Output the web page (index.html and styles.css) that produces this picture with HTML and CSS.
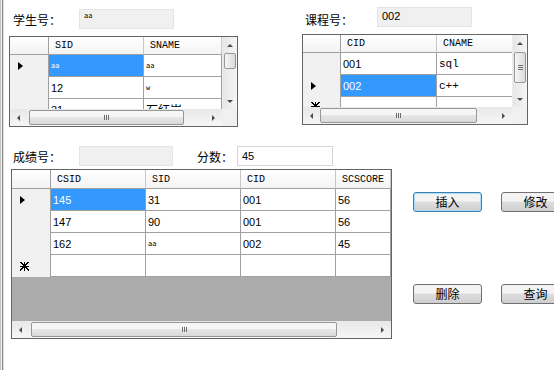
FILE: index.html
```html
<!DOCTYPE html>
<html lang="zh-CN">
<head>
    <meta charset="UTF-8">
    <title>成绩管理</title>
    <link rel="stylesheet" href="styles.css">
</head>
<body>
    <div class="window">
        <div class="frame-edge"></div>
        <div class="content">

            <div class="top">
                <!-- 学生 -->
                <section class="panel panel-student">
                    <div class="field-row">
                        <label class="field-label">学生号：</label>
                        <div class="textbox readonly"><span class="tiny">aa</span></div>
                    </div>
                    <div class="dgv dgv-student">
                        <div class="dgv-cells">
                            <div class="dgv-row dgv-head">
                                <div class="rh"></div><div class="ch">SID</div><div class="ch">SNAME</div>
                            </div>
                            <div class="dgv-row">
                                <div class="rh"><i class="marker-current"></i></div>
                                <div class="cell selected tiny">aa</div><div class="cell tiny">aa</div>
                            </div>
                            <div class="dgv-row">
                                <div class="rh"></div>
                                <div class="cell">12</div><div class="cell tiny">w</div>
                            </div>
                            <div class="dgv-row">
                                <div class="rh"></div>
                                <div class="cell">31</div><div class="cell cjk">石红岩</div>
                            </div>
                        </div>
                        <div class="vscroll">
                            <div class="sb-btn"><i class="arr arr-up"></i></div>
                            <div class="sb-track"><div class="thumb-v thumb-student"></div></div>
                            <div class="sb-btn"><i class="arr arr-down"></i></div>
                        </div>
                        <div class="hscroll">
                            <div class="sb-btn"><i class="arr arr-left"></i></div>
                            <div class="sb-track"><div class="thumb-h thumb-student"><i class="grip-h"></i></div></div>
                            <div class="sb-btn"><i class="arr arr-right"></i></div>
                        </div>
                        <div class="corner"></div>
                    </div>
                </section>

                <!-- 课程 -->
                <section class="panel panel-course">
                    <div class="field-row">
                        <label class="field-label">课程号：</label>
                        <div class="textbox readonly">002</div>
                    </div>
                    <div class="dgv dgv-course">
                        <div class="dgv-cells">
                            <div class="dgv-row dgv-head">
                                <div class="rh"></div><div class="ch">CID</div><div class="ch">CNAME</div>
                            </div>
                            <div class="dgv-row">
                                <div class="rh"></div>
                                <div class="cell">001</div><div class="cell mono">sql</div>
                            </div>
                            <div class="dgv-row">
                                <div class="rh"><i class="marker-current"></i></div>
                                <div class="cell selected">002</div><div class="cell mono">c++</div>
                            </div>
                            <div class="dgv-row">
                                <div class="rh"><i class="marker-new"></i></div>
                                <div class="cell"></div><div class="cell"></div>
                            </div>
                        </div>
                        <div class="vscroll">
                            <div class="sb-btn"><i class="arr arr-up"></i></div>
                            <div class="sb-track"><div class="thumb-v thumb-course"><i class="grip-v"></i></div></div>
                            <div class="sb-btn"><i class="arr arr-down"></i></div>
                        </div>
                        <div class="hscroll">
                            <div class="sb-btn"><i class="arr arr-left"></i></div>
                            <div class="sb-track"><div class="thumb-h thumb-course"><i class="grip-h"></i></div></div>
                            <div class="sb-btn"><i class="arr arr-right"></i></div>
                        </div>
                        <div class="corner"></div>
                    </div>
                </section>
            </div>

            <!-- 成绩 -->
            <section class="bottom">
                <div class="field-row score-fields">
                    <label class="field-label">成绩号：</label>
                    <div class="textbox readonly"></div>
                    <label class="field-label label-score">分数：</label>
                    <div class="textbox editable">45</div>
                </div>

                <div class="bottom-main">
                    <div class="dgv dgv-score">
                        <div class="dgv-cells">
                            <div class="dgv-row dgv-head">
                                <div class="rh"></div><div class="ch">CSID</div><div class="ch">SID</div><div class="ch">CID</div><div class="ch">SCSCORE</div>
                            </div>
                            <div class="dgv-row">
                                <div class="rh"><i class="marker-current"></i></div>
                                <div class="cell selected">145</div><div class="cell">31</div><div class="cell">001</div><div class="cell">56</div>
                            </div>
                            <div class="dgv-row">
                                <div class="rh"></div>
                                <div class="cell">147</div><div class="cell">90</div><div class="cell">001</div><div class="cell">56</div>
                            </div>
                            <div class="dgv-row">
                                <div class="rh"></div>
                                <div class="cell">162</div><div class="cell tiny">aa</div><div class="cell">002</div><div class="cell">45</div>
                            </div>
                            <div class="dgv-row">
                                <div class="rh"><i class="marker-new"></i></div>
                                <div class="cell"></div><div class="cell"></div><div class="cell"></div><div class="cell"></div>
                            </div>
                        </div>
                        <div class="hscroll">
                            <div class="sb-btn"><i class="arr arr-left"></i></div>
                            <div class="sb-track"><div class="thumb-h thumb-score"><i class="grip-h"></i></div></div>
                            <div class="sb-btn"><i class="arr arr-right"></i></div>
                        </div>
                    </div>

                    <div class="buttons">
                        <button class="btn btn-default">插入</button>
                        <button class="btn">修改</button>
                        <button class="btn">删除</button>
                        <button class="btn">查询</button>
                    </div>
                </div>
            </section>

        </div>
    </div>
</body>
</html>
```

FILE: styles.css
```css
* {
    margin: 0;
    padding: 0;
    box-sizing: border-box;
}

body {
    width: 554px;
    height: 370px;
    overflow: hidden;
    background: #ffffff;
    color: #000;
    font-family: 'Liberation Sans', 'Noto Sans CJK SC', sans-serif;
    font-size: 11px;
}

.window {
    display: flex;
    height: 370px;
}

/* left window frame */
.frame-edge {
    width: 4px;
    flex: none;
    background: linear-gradient(to right, #c4c4c4 0 1px, #eeeeee 1px 2px, #8c8c8c 2px 3px, #dcdcdc 3px);
}

.content {
    flex: 1;
    padding-top: 9px;
}

.top {
    display: flex;
}

.panel-student {
    margin-left: 5px;
    width: 229px;
}

.panel-course {
    margin-left: 64px;
    width: 226px;
}

/* label + textbox rows */
.field-row {
    display: flex;
    align-items: center;
    height: 20px;
    padding-left: 4px;
}

.panel-course .field-row {
    padding-left: 3px;
    margin-top: -2px;
    margin-bottom: 2px;
}

.field-label {
    font-family: 'Noto Sans CJK SC', sans-serif;
    font-size: 12px;
    width: 66px;
    flex: none;
}

.panel-course .field-label {
    width: 72px;
    padding-top: 4px;
}

.textbox {
    width: 95px;
    height: 20px;
    padding: 0 4px;
    display: flex;
    align-items: center;
    font-size: 11px;
}

.textbox.readonly {
    background: #f0f0f0;
    border: 1px solid #e4e4e4;
    align-items: flex-start;
    padding-top: 2px;
}

.textbox.editable {
    background: #fff;
    border: 1px solid #d4d4d4;
    width: 96px;
}

.score-fields {
    padding-left: 9px;
}

.score-fields .textbox.readonly {
    width: 94px;
}

.label-score {
    width: 40px;
    margin-left: 24px;
}

/* DataGridView */
.dgv {
    display: grid;
    grid-template-columns: 1fr 15px;
    grid-template-rows: 1fr 17px;
    border: 1px solid #646464;
    background: #fff;
    overflow: hidden;
}

.dgv-student,
.dgv-course {
    height: 91px;
    margin-top: 7px;
}

.dgv-cells {
    overflow: hidden;
    min-width: 0;
    min-height: 0;
}

.dgv-row {
    display: grid;
    height: 22px;
}

.dgv-head {
    height: 18px;
}

.dgv-student .dgv-row {
    grid-template-columns: 39px 95px 78px;
}

.dgv-course .dgv-row {
    grid-template-columns: 38px 96px 77px;
}

.dgv-score .dgv-row {
    grid-template-columns: 39px 95px 95px 95px 55px;
}

.dgv-score .dgv-head {
    height: 19px;
}

.rh {
    background: #f1f1f1;
    border-right: 1px solid #a0a0a0;
    display: flex;
    align-items: center;
    padding-left: 8px;
}

.dgv-head .rh {
    background: linear-gradient(#ffffff, #f2f2f2);
    border-bottom: 1px solid #a0a0a0;
}

.ch {
    background: linear-gradient(#ffffff, #f4f4f4);
    border-right: 1px solid #c8c8c8;
    border-bottom: 1px solid #a0a0a0;
    padding-left: 6px;
    display: flex;
    align-items: center;
    font-family: 'Liberation Mono', monospace;
    font-size: 10px;
    white-space: nowrap;
    overflow: hidden;
}

.cell {
    border-right: 1px solid #a0a0a0;
    border-bottom: 1px solid #a0a0a0;
    padding-left: 2px;
    display: flex;
    align-items: center;
    white-space: nowrap;
    overflow: hidden;
    background: #fff;
}

.cell.selected {
    background: #3399ff;
    color: #fff;
}

.tiny {
    font-family: 'DejaVu Sans Mono', monospace;
    font-size: 7px;
}

.mono {
    font-family: 'Liberation Mono', monospace;
    font-size: 11px;
}

.cjk {
    font-family: 'Noto Sans CJK SC', sans-serif;
    font-size: 12px;
}

/* row header markers */
.marker-current {
    width: 0;
    height: 0;
    border-left: 5px solid #000;
    border-top: 4px solid transparent;
    border-bottom: 4px solid transparent;
}

.marker-new {
    width: 9px;
    height: 9px;
    flex: none;
    background:
        linear-gradient(#000, #000) center / 1px 9px no-repeat,
        linear-gradient(#000, #000) center / 9px 1px no-repeat,
        linear-gradient(45deg, transparent 46%, #000 46% 56%, transparent 56%),
        linear-gradient(-45deg, transparent 46%, #000 46% 56%, transparent 56%);
}

.dgv-course .dgv-row:last-child .rh {
    align-items: flex-start;
    padding-top: 5px;
}

/* scrollbars */
.vscroll {
    display: flex;
    flex-direction: column;
    background: linear-gradient(to right, #e6e6e6, #f5f5f5);
    border-left: 1px solid #ececec;
}

.vscroll .sb-btn {
    height: 16px;
}

.hscroll {
    display: flex;
    background: linear-gradient(#e8e8e8, #f6f6f6);
}

.hscroll .sb-btn {
    width: 17px;
}

.sb-btn {
    flex: none;
    display: flex;
    align-items: center;
    justify-content: center;
}

.sb-track {
    flex: 1;
    display: flex;
    min-width: 0;
    min-height: 0;
}

.vscroll .sb-track {
    flex-direction: column;
    padding: 0 1px;
}

.hscroll .sb-track {
    padding: 1px 0;
}

.corner {
    background: #f0f0f0;
}

.arr {
    width: 0;
    height: 0;
}

.arr-up {
    border-left: 3px solid transparent;
    border-right: 3px solid transparent;
    border-bottom: 3px solid #4d4d4d;
}

.arr-down {
    border-left: 3px solid transparent;
    border-right: 3px solid transparent;
    border-top: 3px solid #4d4d4d;
}

.arr-left {
    border-top: 3px solid transparent;
    border-bottom: 3px solid transparent;
    border-right: 3px solid #4d4d4d;
}

.arr-right {
    border-top: 3px solid transparent;
    border-bottom: 3px solid transparent;
    border-left: 3px solid #4d4d4d;
}

.thumb-v,
.thumb-h {
    border: 1px solid #979797;
    border-radius: 2px;
    display: flex;
    align-items: center;
    justify-content: center;
}

.thumb-v {
    background: linear-gradient(to right, #f6f6f6, #dadada);
}

.thumb-h {
    background: linear-gradient(#f6f6f6 0 45%, #e6e6e6 50%, #d9d9d9);
}

.thumb-v.thumb-student {
    height: 16px;
}

.thumb-v.thumb-course {
    height: 31px;
    margin-top: 1px;
}

.thumb-h.thumb-student {
    margin-left: 2px;
    width: 155px;
}

.thumb-h.thumb-course {
    width: 157px;
}

.thumb-h.thumb-score {
    margin-left: 2px;
    width: 306px;
}

.grip-h {
    width: 5px;
    height: 5px;
    background: repeating-linear-gradient(to right, #6d6d6d 0 1px, transparent 1px 2px);
}

.grip-v {
    width: 5px;
    height: 5px;
    background: repeating-linear-gradient(#6d6d6d 0 1px, transparent 1px 2px);
}

/* bottom section */
.bottom {
    margin-top: 19px;
}

.bottom-main {
    display: flex;
    margin-top: 3px;
}

.dgv-score {
    grid-template-columns: 1fr;
    grid-template-rows: 1fr 17px;
    width: 381px;
    height: 170px;
    margin-left: 7px;
}

.dgv-score .dgv-cells {
    background: #ababab;
}

.buttons {
    display: grid;
    grid-template-columns: 69px 69px;
    column-gap: 19px;
    row-gap: 72px;
    align-content: start;
    margin-left: 21px;
    padding-top: 23px;
    flex: none;
}

.btn {
    width: 69px;
    height: 20px;
    border: 1px solid #707070;
    border-radius: 3px;
    background: linear-gradient(#f3f3f3 0 45%, #dddddd 50%, #cfcfcf);
    font-family: 'Noto Sans CJK SC', sans-serif;
    font-size: 12px;
    line-height: 16px;
    color: #000;
}

.btn-default {
    border-color: #3c7fb1;
    box-shadow: inset 0 0 0 1px #a9dcf6;
}
```
